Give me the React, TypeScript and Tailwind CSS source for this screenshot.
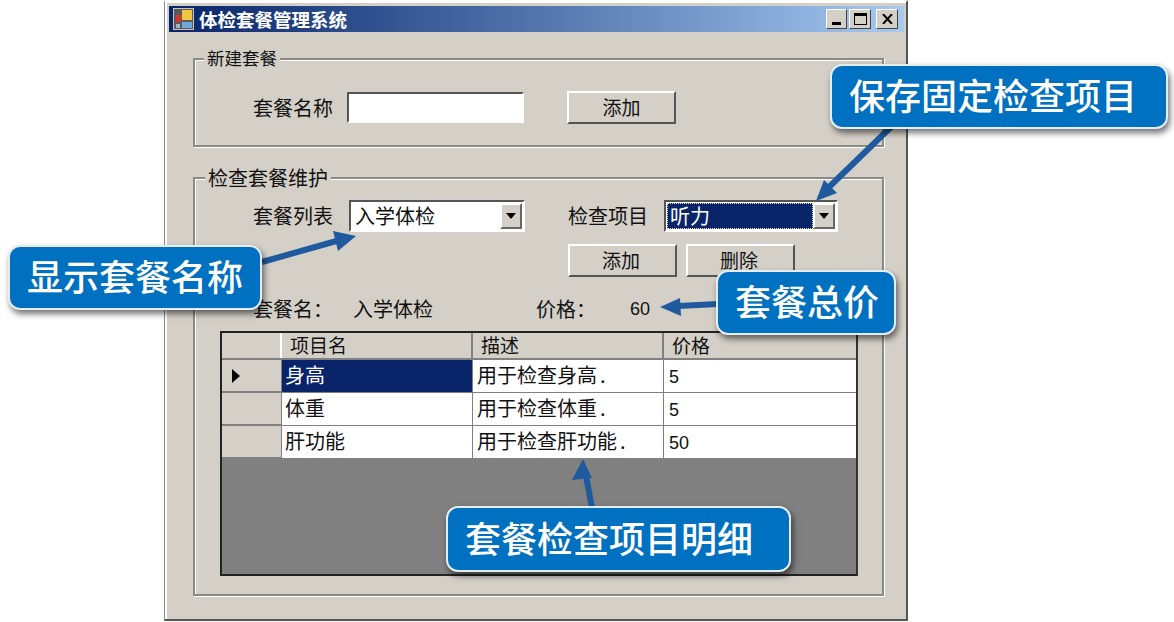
const cjk = 'font-["Noto_Sans_CJK_SC","Liberation_Sans",sans-serif]'

function Btn({ label, className = '' }: { label: string; className?: string }) {
  return (
    <div className={`flex h-[33px] w-[109px] items-center justify-center border-[2px] border-t-white border-l-white border-r-[#555] border-b-[#555] bg-[#d4d0c8] pb-[3px] text-[19px] leading-none text-[#111] ${className}`}>
      {label}
    </div>
  )
}

function Combo({ value, active, className = '' }: { value: string; active?: boolean; className?: string }) {
  return (
    <div className={`flex h-[32px] items-stretch border-[2px] border-t-[#555] border-l-[#555] border-r-white border-b-white bg-white p-[1px] ${className}`}>
      {active ? (
        <div className="flex-1 border border-dotted border-[#f5e9a0] bg-[#0a246a] pl-[2px] text-[20px] leading-[24px] text-white">{value}</div>
      ) : (
        <div className="flex-1 pl-[3px] text-[20px] leading-[26px] text-[#111]">{value}</div>
      )}
      <div className="flex w-[22px] items-center justify-center border-[2px] border-t-white border-l-white border-r-[#666] border-b-[#666] bg-[#d4d0c8]">
        <svg width="10" height="6" viewBox="0 0 10 6"><path d="M0 0h10L5 6z" fill="#000" /></svg>
      </div>
    </div>
  )
}

function GroupBox({ title, legendClass, className, children }: { title: string; legendClass: string; className: string; children: React.ReactNode }) {
  return (
    <div className={`relative ml-[28px] w-[691px] border-[2px] border-[#8a8a86] shadow-[inset_1px_1px_0_#fff,1px_1px_0_#fff] ${className}`}>
      <span className={`absolute bg-[#d4d0c8] leading-none text-[#111] ${legendClass}`}>{title}</span>
      {children}
    </div>
  )
}

const rows = [
  { name: '身高', desc: '用于检查身高', price: '5' },
  { name: '体重', desc: '用于检查体重', price: '5' },
  { name: '肝功能', desc: '用于检查肝功能', price: '50' },
]

function Grid() {
  return (
    <div className="ml-[25px] mt-[12px] h-[245px] w-[638px] border-[2px] border-[#222] border-r-[#333] bg-[#808080]">
      <div className="flex h-[27px] border-b-[2px] border-[#808080] bg-[#d4d0c8] text-[19px] leading-[24px] text-[#111]">
        <div className="w-[60px] border-r-[2px] border-white" />
        <div className="w-[191px] border-r-[2px] border-[#808080] pl-[8px]">项目名</div>
        <div className="w-[191px] border-r-[2px] border-[#808080] pl-[8px]">描述</div>
        <div className="flex-1 pl-[8px]">价格</div>
      </div>
      {rows.map((r, i) => (
        <div key={r.name} className="flex h-[33px] text-[20px] leading-[30px] text-[#111]">
          <div className="flex w-[60px] items-center border-b-[2px] border-r border-[#808080] bg-[#d4d0c8] pl-[10px]">
            {i === 0 && <svg width="8" height="14" viewBox="0 0 8 14"><path d="M0 0l8 7-8 7z" fill="#000" /></svg>}
          </div>
          <div className={`w-[191px] border-b border-r border-[#808080] pl-[3px] ${i === 0 ? 'bg-[#0a246a] text-white' : 'bg-white'}`}>{r.name}</div>
          <div className="w-[191px] whitespace-nowrap border-b border-r border-[#808080] bg-white pl-[4px]">
            {r.desc}<span className="ml-[3px]">.</span>
          </div>
          <div className="flex-1 border-b border-[#808080] bg-white pl-[5px] pt-[2px] font-['Liberation_Sans'] text-[18px]">{r.price}</div>
        </div>
      ))}
    </div>
  )
}

function Callout({ text, className }: { text: string; className: string }) {
  return (
    <div className={`absolute flex items-center whitespace-nowrap rounded-[12px] border-[2px] border-[#e6edf5] bg-[#0070c0] pb-[5px] pl-[17px] text-[36px] font-medium leading-none text-white shadow-[2px_4px_6px_rgba(0,0,0,0.55)] ${className}`}>
      {text}
    </div>
  )
}

function Arrow({ d, head }: { d: string; head: string }) {
  return (
    <>
      <path d={d} stroke="#1f5a9e" strokeWidth="6" fill="none" />
      <path d={head} fill="#1f5a9e" />
    </>
  )
}

export default function App() {
  return (
    <div className={`relative h-[622px] w-[1174px] overflow-hidden bg-white ${cjk}`}>
      {/* form window */}
      <div className="ml-[164px] h-[621px] w-[744px] border-t-[2px] border-l-[1px] border-r-[2px] border-b-[2px] border-t-white border-l-[#8a8a86] border-r-[#555] border-b-[#555] bg-[#d4d0c8] shadow-[inset_2px_1px_0_#fff]">
        <div className="ml-[4px] mr-[2px] mt-[4px] flex h-[26px] items-center bg-gradient-to-r from-[#0a246a] to-[#a6caf0] pl-[4px] pr-[6px]">
          <svg width="21" height="22" viewBox="0 0 21 22" className="shrink-0">
            <rect x="0" y="0" width="21" height="22" fill="#c9c5ba" />
            <rect x="1" y="1" width="19" height="20" fill="#5b5b5b" />
            <rect x="3" y="7" width="5" height="7" fill="#d8352a" />
            <rect x="9" y="2" width="10" height="10" fill="#f3c63f" />
            <rect x="9" y="14" width="10" height="6" fill="#6fa8dc" />
            <rect x="3" y="16" width="4" height="4" fill="#9db8c9" />
          </svg>
          <span className="ml-[5px] text-[18.5px] font-bold leading-none text-white">体检套餐管理系统</span>
          <div className="ml-auto flex items-center">
            <div className="flex h-[20px] w-[21px] items-end justify-center border border-t-white border-l-white border-r-[#444] border-b-[#444] bg-[#d4d0c8] pb-[3px]">
              <div className="h-[3px] w-[9px] bg-black" />
            </div>
            <div className="ml-[2px] flex h-[20px] w-[22px] items-center justify-center border border-t-white border-l-white border-r-[#444] border-b-[#444] bg-[#d4d0c8]">
              <div className="h-[12px] w-[13px] border border-t-[3px] border-black" />
            </div>
            <div className="ml-[5px] flex h-[20px] w-[22px] items-center justify-center border border-t-white border-l-white border-r-[#444] border-b-[#444] bg-[#d4d0c8]">
              <svg width="11" height="10" viewBox="0 0 11 10"><path d="M1 0l9 10M10 0L1 10" stroke="#000" strokeWidth="2" /></svg>
            </div>
          </div>
        </div>

        <GroupBox title="新建套餐" legendClass="left-[9px] top-[-11px] px-[3px] text-[17.5px]" className="mt-[26px] h-[89px]">
          <div className="flex items-center pl-[58px] pt-[31px]">
            <span className="w-[80px] pt-[1px] text-[20px] leading-none text-[#111]">套餐名称</span>
            <div className="ml-[14px] h-[31px] w-[177px] border-[2px] border-t-[#555] border-l-[#555] border-r-white border-b-white bg-white" />
            <Btn label="添加" className="ml-[43px]" />
          </div>
        </GroupBox>

        <GroupBox title="检查套餐维护" legendClass="left-[10px] top-[-11px] px-[3px] text-[20px]" className="mt-[30px] h-[419px]">
          <div className="flex items-center pl-[58px] pt-[21px]">
            <span className="w-[80px] text-[20px] leading-none text-[#111]">套餐列表</span>
            <Combo value="入学体检" className="ml-[16px] w-[176px]" />
            <span className="ml-[43px] w-[80px] text-[20px] leading-none text-[#111]">检查项目</span>
            <Combo value="听力" active className="ml-[16px] w-[174px]" />
          </div>
          <div className="flex pl-[373px] pt-[12px]">
            <Btn label="添加" className="pr-[3px]" />
            <Btn label="删除" className="ml-[9px] pr-[3px]" />
          </div>
          <div className="flex h-[42px] items-center whitespace-nowrap pl-[58px] pt-[22px] text-[20px] leading-none text-[#111]">
            <span className="w-[100px]">套餐名：</span>
            <span className="w-[183px]">入学体检</span>
            <span className="w-[94px]">价格：</span>
            <span className="font-['Liberation_Sans'] text-[18px]">60</span>
          </div>
          <Grid />
        </GroupBox>
      </div>

      {/* annotation arrows */}
      <svg className="absolute inset-0" width="1174" height="622" viewBox="0 0 1174 622">
        <Arrow d="M893 125L826 190" head="M816 201l8-21 13 13z" />
        <Arrow d="M262 262L340 240" head="M356 236l-18 15-5-20z" />
        <Arrow d="M718 304L678 306" head="M660 307l20-9 1 18z" />
        <Arrow d="M592 508L586 476" head="M583 459l-11 21 20-2z" />
      </svg>

      <Callout text="保存固定检查项目" className="left-[830px] top-[64px] h-[65px] w-[338px]" />
      <Callout text="显示套餐名称" className="left-[8px] top-[245px] h-[65px] w-[254px]" />
      <Callout text="套餐总价" className="left-[716px] top-[270px] h-[65px] w-[180px]" />
      <Callout text="套餐检查项目明细" className="left-[446px] top-[506px] h-[66px] w-[345px]" />
    </div>
  )
}
